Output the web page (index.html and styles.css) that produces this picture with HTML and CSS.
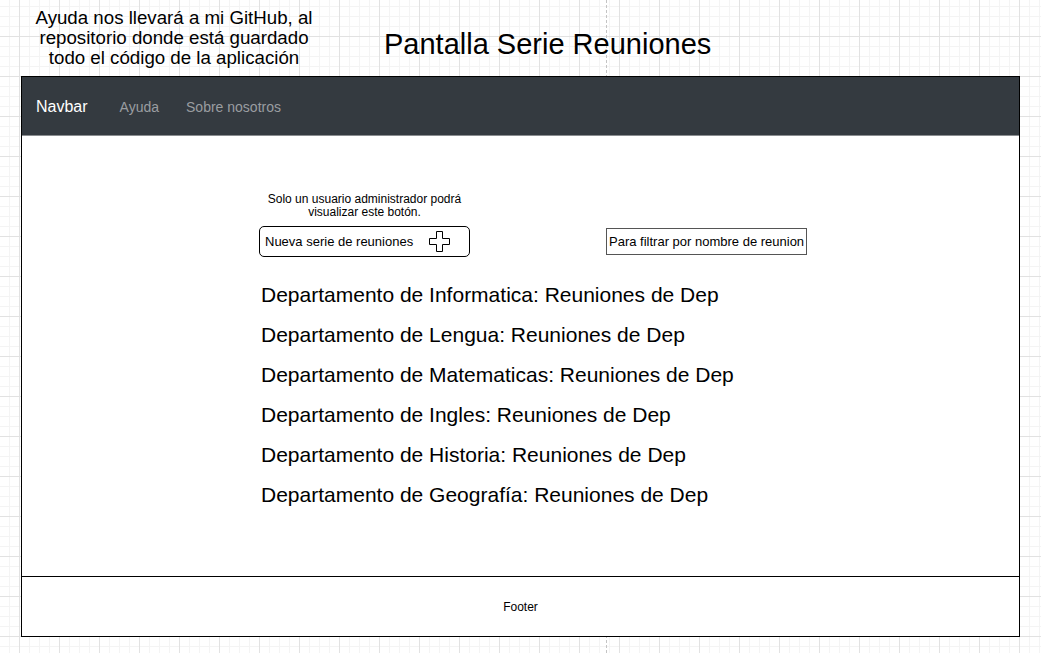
FILE: index.html
```html
<!DOCTYPE html>
<html lang="es">
<head>
<meta charset="utf-8">
<title>Pantalla Serie Reuniones</title>
<link rel="stylesheet" href="styles.css">
</head>
<body>
<div class="page-break"></div>
<header class="canvas-head">
  <p class="note">Ayuda nos llevará a mi GitHub, al repositorio donde está guardado todo el código de la aplicación</p>
  <h1 class="title">Pantalla Serie Reuniones</h1>
</header>
<div class="frame">
  <nav class="navbar">
    <span class="brand">Navbar</span>
    <a class="nav-link">Ayuda</a>
    <a class="nav-link">Sobre nosotros</a>
  </nav>
  <main class="main">
    <div class="toolbar">
      <div class="new-col">
        <p class="caption">Solo un usuario administrador podrá visualizar este botón.</p>
        <button class="new-btn">
          <span>Nueva serie de reuniones</span>
          <svg class="plus" width="21" height="21" viewBox="0 0 21 21" aria-hidden="true">
            <path d="M7.5 0.5 H13.5 V7.5 H20.5 V13.5 H13.5 V20.5 H7.5 V13.5 H0.5 V7.5 H7.5 Z" fill="#fff" stroke="#000" stroke-width="1"/>
          </svg>
        </button>
      </div>
      <div class="filter">Para filtrar por nombre de reunion</div>
    </div>
    <ul class="list">
      <li>Departamento de Informatica: Reuniones de Dep</li>
      <li>Departamento de Lengua: Reuniones de Dep</li>
      <li>Departamento de Matematicas: Reuniones de Dep</li>
      <li>Departamento de Ingles: Reuniones de Dep</li>
      <li>Departamento de Historia: Reuniones de Dep</li>
      <li>Departamento de Geografía: Reuniones de Dep</li>
    </ul>
  </main>
  <footer class="footer">Footer</footer>
</div>
</body>
</html>
```
FILE: styles.css
```css
html, body {
  margin: 0;
  padding: 0;
}
body {
  width: 1041px;
  height: 653px;
  overflow: hidden;
  position: relative;
  font-family: "Liberation Sans", Arial, Helvetica, sans-serif;
  color: #000;
  background-color: #fff;
  background-image:
    linear-gradient(to right, #e2e2e2 1px, transparent 1px),
    linear-gradient(to bottom, #e2e2e2 1px, transparent 1px),
    linear-gradient(to right, #f4f4f4 1px, transparent 1px),
    linear-gradient(to bottom, #f4f4f4 1px, transparent 1px);
  background-size: 40px 40px, 40px 40px, 10px 10px, 10px 10px;
  background-position: 19px 36px, 19px 36px, 19px 36px, 19px 36px;
}
.page-break {
  position: absolute;
  left: 606px;
  top: 0;
  height: 653px;
  border-left: 1px dashed #c4c4c4;
}
.canvas-head {
  height: 76px;
  display: flex;
  align-items: flex-start;
  box-sizing: border-box;
  padding-top: 8px;
  position: relative;
}
.note {
  margin: 0 0 0 19px;
  width: 310px;
  font-size: 18.7px;
  line-height: 20px;
  text-align: center;
}
.title {
  margin: 20px 0 0 55px;
  font-size: 29px;
  line-height: 32px;
  font-weight: normal;
}
.frame {
  position: relative;
  margin-left: 21px;
  width: 999px;
  height: 561px;
  box-sizing: border-box;
  border: 1px solid #000;
  background: #fff;
  display: flex;
  flex-direction: column;
}
.navbar {
  height: 59px;
  background: #343a40;
  display: flex;
  align-items: center;
  padding-left: 14px;
  padding-top: 1px;
  border-bottom: 1px solid #8a8d90;
  box-sizing: border-box;
}
.brand {
  color: #fff;
  font-size: 16px;
  margin-right: 32px;
}
.nav-link {
  color: #9a9da0;
  font-size: 14px;
  margin-right: 27px;
}
.main {
  height: 440px;
  box-sizing: border-box;
  padding: 57px 0 0 237px;
}
.toolbar {
  display: flex;
  align-items: flex-end;
}
.new-col {
  width: 211px;
  display: flex;
  flex-direction: column;
}
.caption {
  margin: 0 0 7px;
  font-size: 12px;
  line-height: 13px;
  text-align: center;
}
.new-btn {
  width: 211px;
  height: 31px;
  box-sizing: border-box;
  border: 1px solid #000;
  border-radius: 5px;
  background: #fff;
  display: flex;
  align-items: center;
  padding: 0 0 0 5px;
  font-family: inherit;
  font-size: 13px;
  color: #000;
}
.plus {
  margin-left: 16px;
}
.filter {
  margin: 0 0 2px 136px;
  width: 201px;
  height: 27px;
  box-sizing: border-box;
  border: 1px solid #555;
  font-size: 13px;
  line-height: 25px;
  padding-left: 2px;
  white-space: nowrap;
  overflow: hidden;
}
.list {
  list-style: none;
  margin: 18px 0 0 2px;
  padding: 0;
}
.list li {
  font-size: 21px;
  line-height: 40px;
}
.footer {
  flex: 1;
  border-top: 1px solid #000;
  display: flex;
  align-items: center;
  justify-content: center;
  font-size: 12px;
}
```
